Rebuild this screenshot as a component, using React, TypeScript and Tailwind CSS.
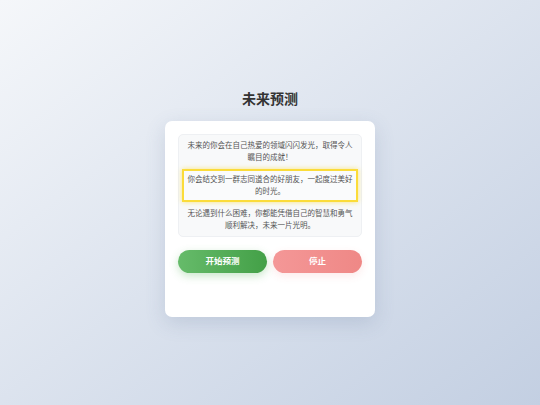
import React, { useState } from 'react';

const predictions = [
  '未来的你会在自己热爱的领域闪闪发光，取得令人瞩目的成就！',
  '你会结交到一群志同道合的好朋友，一起度过美好的时光。',
  '无论遇到什么困难，你都能凭借自己的智慧和勇气顺利解决，未来一片光明。',
];

const App: React.FC = () => {
  const [active, setActive] = useState(1);
  const [running, setRunning] = useState(false);

  const handleStart = () => {
    setRunning(true);
    setActive((active + 1) % predictions.length);
  };

  const handleStop = () => {
    setRunning(false);
  };

  return (
    <div
      className="min-h-screen w-full flex flex-col items-center justify-center bg-gradient-to-br from-[#f5f7fa] to-[#c3cfe2]"
      style={{ fontFamily: '"Noto Sans", "Noto Sans CJK SC", sans-serif' }}
    >
      <h1 className="text-[14px] leading-[20px] font-bold text-[#333] mb-[12px]">未来预测</h1>

      <div className="w-[210px] h-[196px] bg-white rounded-[7px] p-[13px] shadow-[0_6px_20px_rgba(80,100,140,0.18)] flex flex-col">
        <div className="flex flex-col gap-[1px] px-[3px] bg-[#f8f9fa] border border-[#eef0f3] rounded-[5px]">
          {predictions.map((text, i) => (
            <div
              key={i}
              className={
                i === active
                  ? 'border-2 border-[#fbdc3a] bg-[#fafbfc] shadow-[0_0_5px_rgba(250,215,40,0.6)] py-[2.5px] px-[2px] text-center text-[7.5px] leading-[12px] text-[#555]'
                  : 'border-2 border-transparent py-[2.5px] px-[2px] text-center text-[7.5px] leading-[12px] text-[#555]'
              }
            >
              {text}
            </div>
          ))}
        </div>

        <div className="flex gap-[6px] mt-[13px]">
          <button
            onClick={handleStart}
            className="flex-1 h-[23px] rounded-full bg-gradient-to-r from-[#66bb6a] to-[#43a047] text-white text-[8.5px] font-bold shadow-[0_3px_8px_rgba(76,175,80,0.3)]"
          >
            开始预测
          </button>
          <button
            onClick={handleStop}
            className={
              running
                ? 'flex-1 h-[23px] rounded-full bg-gradient-to-r from-[#ef5350] to-[#e53935] text-white text-[8.5px] font-bold'
                : 'flex-1 h-[23px] rounded-full bg-gradient-to-r from-[#f49797] to-[#ef8886] text-white text-[8.5px] font-bold shadow-[0_3px_8px_rgba(239,83,80,0.12)]'
            }
          >
            停止
          </button>
        </div>
      </div>
    </div>
  );
};

export default App;
